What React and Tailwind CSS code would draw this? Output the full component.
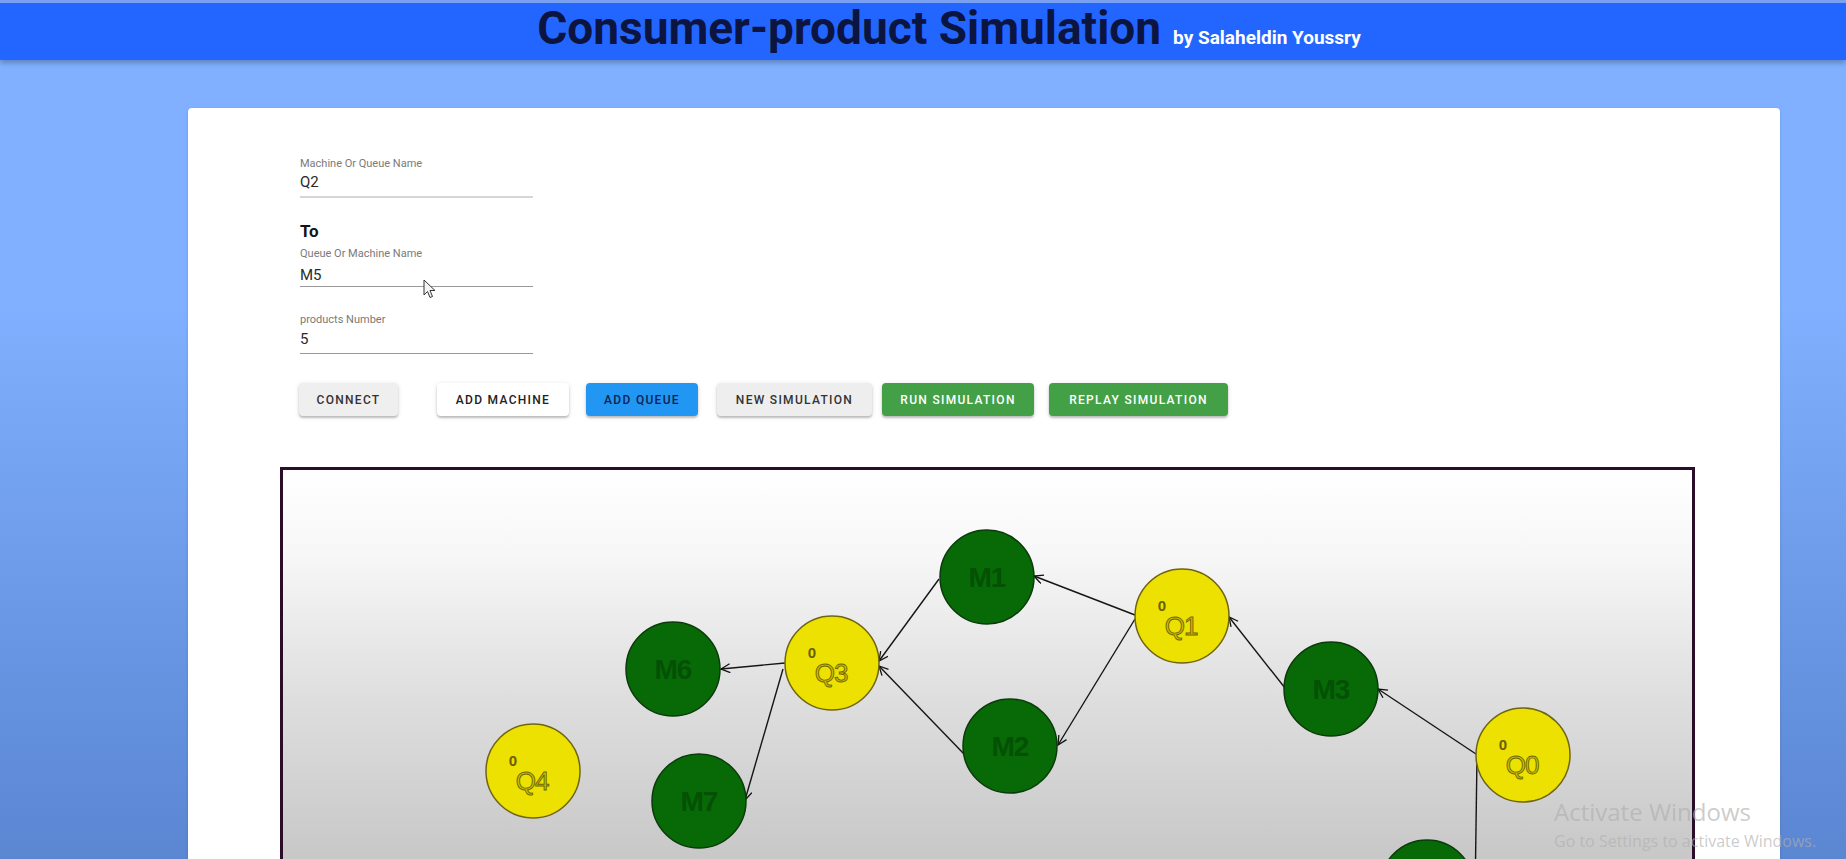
import React from "react";

const machines = [
  { id: "M1", x: 987, y: 578 },
  { id: "M2", x: 1010, y: 747 },
  { id: "M3", x: 1331, y: 690 },
  { id: "M6", x: 673, y: 670 },
  { id: "M7", x: 699, y: 802 },
  { id: "", x: 1427, y: 888 },
];

const queues = [
  { id: "Q0", x: 1523, y: 756 },
  { id: "Q1", x: 1182, y: 617 },
  { id: "Q3", x: 832, y: 664 },
  { id: "Q4", x: 533, y: 772 },
];

// [x1, y1, x2, y2] arrow ends at (x2, y2)
const edges = [
  [1135, 616, 1034, 577],
  [1135, 620, 1058, 746],
  [1285, 689, 1229, 618],
  [1476, 755, 1378, 690],
  [939, 580, 879, 662],
  [964, 755, 879, 667],
  [785, 664, 721, 670],
  [783, 670, 745, 801],
];

function Field({ label, value, line, className = "" }) {
  return (
    <div className={`w-[233px] ${className}`}>
      <div className="text-[11px] leading-[13px] text-[#7a7a7a]">{label}</div>
      <div className={`text-[15px] leading-[18px] text-[#2a2a2a] ${line}`}>{value}</div>
    </div>
  );
}

function Btn({ children, className = "" }) {
  return (
    <button className={`h-[33px] rounded-[4px] text-[12px] font-medium tracking-[1.3px] uppercase shadow-[0_2px_2px_rgba(0,0,0,0.2),0_1px_5px_rgba(0,0,0,0.12)] ${className}`}>
      {children}
    </button>
  );
}

function Graph() {
  return (
    <svg width="1409" height="560" viewBox="283 471 1409 560" className="block">
      <defs>
        <linearGradient id="bg" gradientUnits="userSpaceOnUse" x1="0" y1="471" x2="0" y2="1031">
          <stop offset="0" stopColor="#ffffff" />
          <stop offset="0.15" stopColor="#f7f7f7" />
          <stop offset="0.41" stopColor="#dedede" />
          <stop offset="0.69" stopColor="#c8c8c8" />
          <stop offset="1" stopColor="#b8b8b8" />
        </linearGradient>
        <marker id="arr" markerWidth="12" markerHeight="12" refX="10" refY="5" orient="auto" markerUnits="userSpaceOnUse">
          <path d="M1,0.5 L10,5 L1,9.5" fill="none" stroke="#111" strokeWidth="1.3" />
        </marker>
      </defs>
      <rect x="283" y="471" width="1409" height="560" fill="url(#bg)" />

      {edges.map(([x1, y1, x2, y2], i) => (
        <line key={i} x1={x1} y1={y1} x2={x2} y2={y2} stroke="#151515" strokeWidth="1.4" markerEnd="url(#arr)" />
      ))}
      <line x1="1477" y1="757" x2="1475" y2="900" stroke="#151515" strokeWidth="1.4" />

      {machines.map((m, i) => (
        <g key={i}>
          <circle cx={m.x} cy={m.y} r="47" fill="#076a07" stroke="#0b3a0b" strokeWidth="1.5" />
          {m.id && (
            <text x={m.x} y={m.y + 10} textAnchor="middle" fontFamily="'Liberation Sans', Arial, sans-serif" fontWeight="700" fontSize="28" fill="#045004" letterSpacing="-1">
              {m.id}
            </text>
          )}
        </g>
      ))}

      {queues.map((q) => (
        <g key={q.id}>
          <circle cx={q.x} cy={q.y} r="47" fill="#ece100" stroke="#6f6414" strokeWidth="1.5" />
          <text x={q.x - 20} y={q.y - 5} textAnchor="middle" fontFamily="'Liberation Sans', Arial, sans-serif" fontWeight="700" fontSize="15" fill="#6a5e00">
            0
          </text>
          <text x={q.x - 1} y={q.y + 19} textAnchor="middle" fontFamily="'Liberation Sans', Arial, sans-serif" fontSize="26" fill="#cdbf00" stroke="#6e6608" strokeWidth="0.9" letterSpacing="-1">
            {q.id}
          </text>
        </g>
      ))}
    </svg>
  );
}

export default function App() {
  return (
    <div className="relative h-[859px] w-[1846px] overflow-hidden bg-linear-to-b from-[#80b0ff] from-35% to-[#5a86d2] font-['Roboto',sans-serif]">
      {/* Header */}
      <header className="relative z-10 flex h-[60px] justify-center border-t-[3px] border-[#7aa0f2] bg-[#2366ff] pl-[52px] pt-[2px] shadow-[0_3px_5px_rgba(0,0,0,0.25)]">
        <div className="flex items-baseline">
          <h1 className="text-[46px] font-bold leading-[46px] text-[#0c1440]">Consumer-product Simulation</h1>
          <span className="ml-[12px] text-[19px] font-bold text-white">by Salaheldin Youssry</span>
        </div>
      </header>

      {/* Card */}
      <main className="ml-[188px] mt-[48px] h-[900px] w-[1592px] rounded-[4px] bg-white pt-[49px] shadow-[0_1px_3px_rgba(0,0,0,0.15)]">
        <div className="pl-[112px]">
          <Field label="Machine Or Queue Name" value="Q2" line="mt-[3px] pb-[5px] border-b-2 border-[#d6d6d6]" />
          <div className="mt-[23px] text-[17px] font-bold leading-[20px] text-[#151515]">To</div>
          <Field label="Queue Or Machine Name" value="M5" line="mt-[6px] pb-[2px] border-b border-[#9a9a9a]" className="mt-[6px]" />
          <Field label="products Number" value="5" line="mt-[4px] pb-[5px] border-b border-[#9a9a9a]" className="mt-[26px]" />

          <div className="mt-[29px] flex">
            <Btn className="ml-[-1px] w-[99px] bg-[#efefef] text-[#333]">Connect</Btn>
            <Btn className="ml-[39px] w-[132px] bg-white text-[#222]">Add Machine</Btn>
            <Btn className="ml-[17px] w-[112px] bg-[#2196f3] text-[#0d2450]">Add Queue</Btn>
            <Btn className="ml-[19px] w-[155px] bg-[#eeeeee] text-[#333]">New Simulation</Btn>
            <Btn className="ml-[10px] w-[152px] bg-[#43a047] text-white">Run Simulation</Btn>
            <Btn className="ml-[15px] w-[179px] bg-[#43a047] text-white">Replay Simulation</Btn>
          </div>
        </div>

        <div className="ml-[92px] mt-[51px] w-[1415px] border-[3px] border-[#2b0d2b]">
          <Graph />
        </div>
      </main>

      {/* mouse pointer */}
      <svg className="absolute left-[423px] top-[279px]" width="14" height="20" viewBox="0 0 14 20">
        <path d="M1,1 L1,16 L4.5,12.5 L7,18.5 L9.5,17.5 L7,11.5 L12,11.5 Z" fill="#f4f4f4" stroke="#333" strokeWidth="1" strokeLinejoin="round" />
      </svg>

      {/* watermark */}
      <div className="pointer-events-none absolute left-[1554px] top-[800px] whitespace-nowrap font-['Open_Sans',sans-serif] text-[rgba(175,175,175,0.65)]">
        <div className="text-[24px] leading-none">Activate Windows</div>
        <div className="mt-[9px] text-[16px] leading-none">Go to Settings to activate Windows.</div>
      </div>
    </div>
  );
}
